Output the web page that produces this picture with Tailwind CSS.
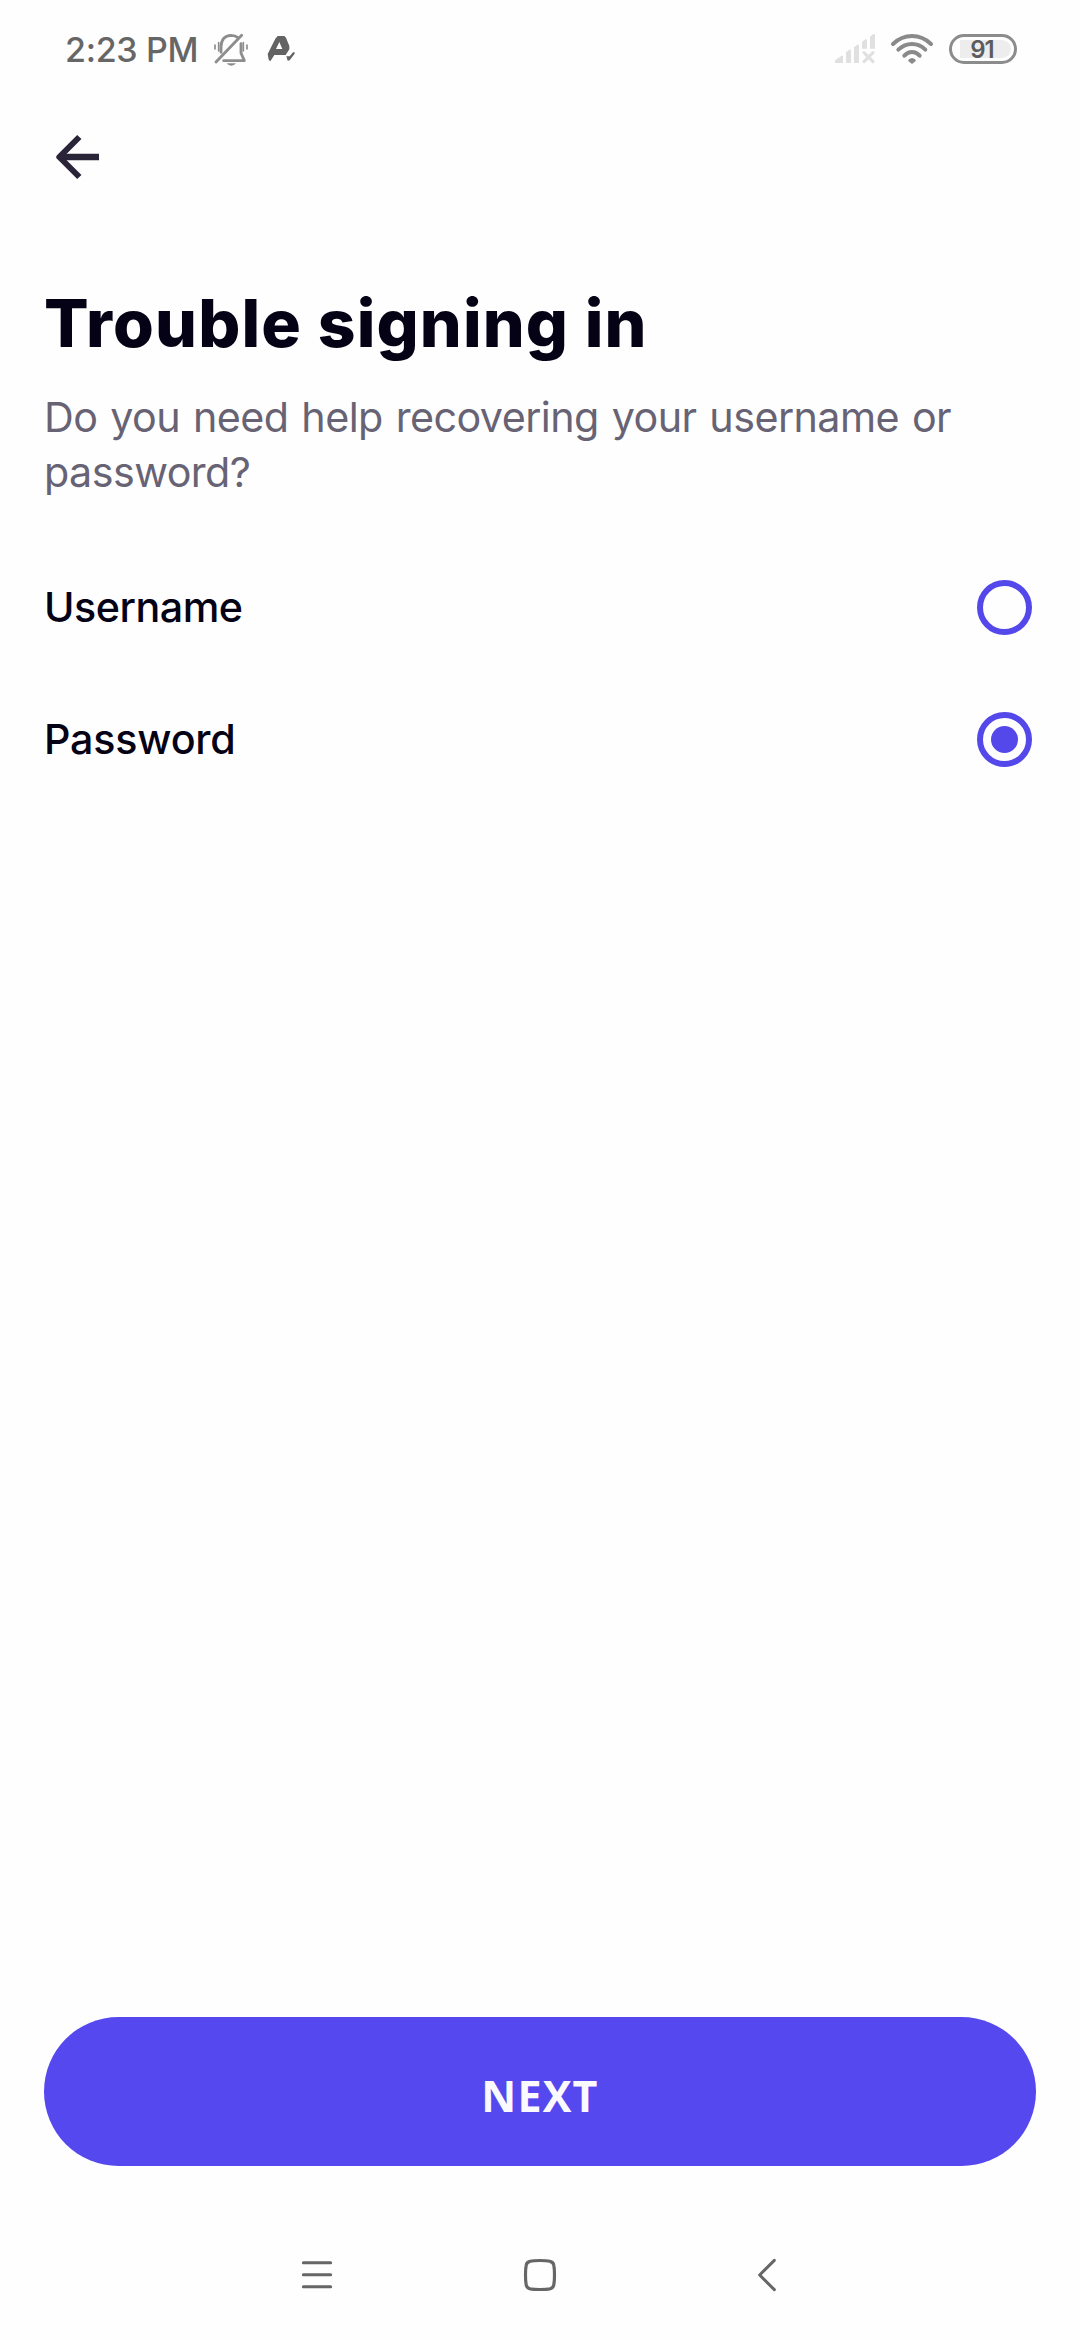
<!DOCTYPE html>
<html lang="en">
<head>
<meta charset="utf-8">
<title>Trouble signing in</title>
<script src="https://cdn.jsdelivr.net/npm/@tailwindcss/browser@4"></script>
</head>
<body class="bg-[#fefefe]">
<div class="flex h-[2340px] w-[1080px] flex-col font-['Inter',sans-serif] text-[#060216]">
  <header class="flex h-[100px] items-center pl-[65px] pr-[63px] text-[#666]">
    <span class="mb-0.5 w-[145px] whitespace-nowrap text-[34px] font-medium tracking-[-0.300px]">2:23 PM</span>
    <!-- Silent mode -->
    <svg class="h-20 w-10" viewBox="510 0 120 240" fill="none" stroke="#8d8d8d" stroke-width="8" stroke-linecap="round" stroke-linejoin="round">
      <path d="M543 127V109Q545 77 573 76Q586 76 594 83M603 101V129L613 152H551M528 156L605 76" stroke-width="8.500"/>
      <path d="M536 98V123M610 98V123" stroke-width="5"/><path d="M525 105V117M621 105V117" stroke-width="5"/>
      <path d="M560 160H588Q583 167 574 167T560 160Z" fill="#8d8d8d" stroke="none"/>
    </svg>
    <!-- App notification -->
    <svg class="ml-[15px] h-20 w-[35px]" viewBox="675 0 105 240" fill="#636363">
      <path fill-rule="evenodd" d="M713 78H733L738 83L748 108V118L737 135H703L691 154L686 149L683 132L706 86ZM718 96L708 117H727Z"/>
      <path d="M739 139L749 139L759 127L764 127V131L749 151L743 152Z"/>
    </svg>
    <div class="ml-auto flex items-center">
      <!-- No signal -->
      <svg class="h-20 w-12" viewBox="60 0 144 240" fill="#e0e0e0">
        <path d="M72 159V151L92 137Q96 135 96 139V159ZM105 159V127L115 119Q120 118 120 123V159ZM129 159V112L139 104Q144 103 144 108V159ZM153 116V96L163 88Q168 87 168 92V116ZM177 116V80L187 72Q192 71 192 76V116Z"/>
        <path d="M159 128L186 155M186 128L159 155" stroke="#e0e0e0" stroke-width="9" stroke-linecap="round"/>
      </svg>
      <!-- Wi-Fi -->
      <svg class="ml-2 h-20 w-[50px]" viewBox="228 0 150 240" fill="none" stroke="#8a8a8a" stroke-width="12" stroke-linecap="round">
        <path d="M246 102Q271 78 303 78T360 102M262 119Q280 102 303 102T343 119M280 137Q290 126 303 126T326 137"/>
        <path d="M303 162L291 152Q294 144 303 144T315 152Z" fill="#8a8a8a" stroke="none"/>
      </svg>
      <!-- Battery -->
      <div class="mb-0.5 ml-3 flex h-[30px] w-[68px] rounded-full border-3 border-[#8c8c8c] py-[3px] pl-2 pr-[3px]">
        <span class="flex flex-1 items-center justify-center rounded-r-full bg-[#ededed] pt-px pr-[7px] text-[24px] leading-none font-semibold tracking-[-1px] text-[#5c5c5c]">91</span>
      </div>
    </div>
  </header>

  <button class="mt-[30px] ml-[50px] w-[60px]" aria-label="Back">
    <svg class="h-[55px] w-[60px]" viewBox="60 60 180 165" fill="none" stroke="#292438" stroke-width="18">
      <path d="M207 141H88" stroke-width="19"/><path d="M148 81L88 141L148 201" stroke-linejoin="round"/>
    </svg>
  </button>

  <main class="mt-[98px] flex flex-1 flex-col px-11">
    <h1 class="text-[66px] leading-[80px] font-extrabold tracking-[1.150px]">Trouble signing in</h1>
    <p class="mt-[26.500px] text-[41.250px] leading-[55px] tracking-[-0.550px] whitespace-nowrap text-[#676374] [word-spacing:1.800px]">Do you need help recovering your username or<br>password?</p>
    <div class="mt-[41.500px] text-[41.250px] font-medium">
      <div class="flex h-33 items-center justify-between pr-1">
        <span class="pt-px tracking-[-0.500px]">Username</span>
        <span class="size-[55px] rounded-full border-6 border-[#5548eb]"></span>
      </div>
      <div class="flex h-33 items-center justify-between pr-1">
        <span class="pt-px tracking-[-0.200px]">Password</span>
        <span class="flex size-[55px] items-center justify-center rounded-full border-6 border-[#5548eb]"><i class="size-[27px] rounded-full bg-[#5548eb]"></i></span>
      </div>
    </div>
    <button class="mt-auto flex h-[149px] items-center justify-center rounded-full bg-[#5548ee] pt-2.5 font-['Open_Sans',sans-serif] text-[43px] font-bold tracking-[1.200px] text-[#fafafe]">NEXT</button>
  </main>

  <nav class="mt-16 mb-5 flex h-[90px] items-center" aria-label="System">
    <svg class="ml-[297px] h-[90px] w-10" viewBox="51 0 120 270" stroke="#666" stroke-width="9" stroke-linecap="round"><path d="M70 98H152M70 134H152M70 170H152"/></svg>
    <svg class="ml-[183px] h-[90px] w-10" viewBox="720 0 120 270" fill="none" stroke="#666" stroke-width="9.500"><path d="M780 91.500Q800 91.500 810 94Q820 96 821.500 106Q823.500 116 823.500 135T821.500 164Q820 174 810 176.500Q800 178.500 780 178.500T750 176.500Q740 174 738.500 164Q736.500 154 736.500 135T738.500 106Q740 96 750 94Q760 91.500 780 91.500Z"/></svg>
    <svg class="ml-[187px] h-[90px] w-10" viewBox="1401 0 120 270" fill="none" stroke="#666" stroke-width="9" stroke-linecap="round" stroke-linejoin="round"><path d="M1483 91L1439 135L1483 179"/></svg>
  </nav>
</div>
</body>
</html>
